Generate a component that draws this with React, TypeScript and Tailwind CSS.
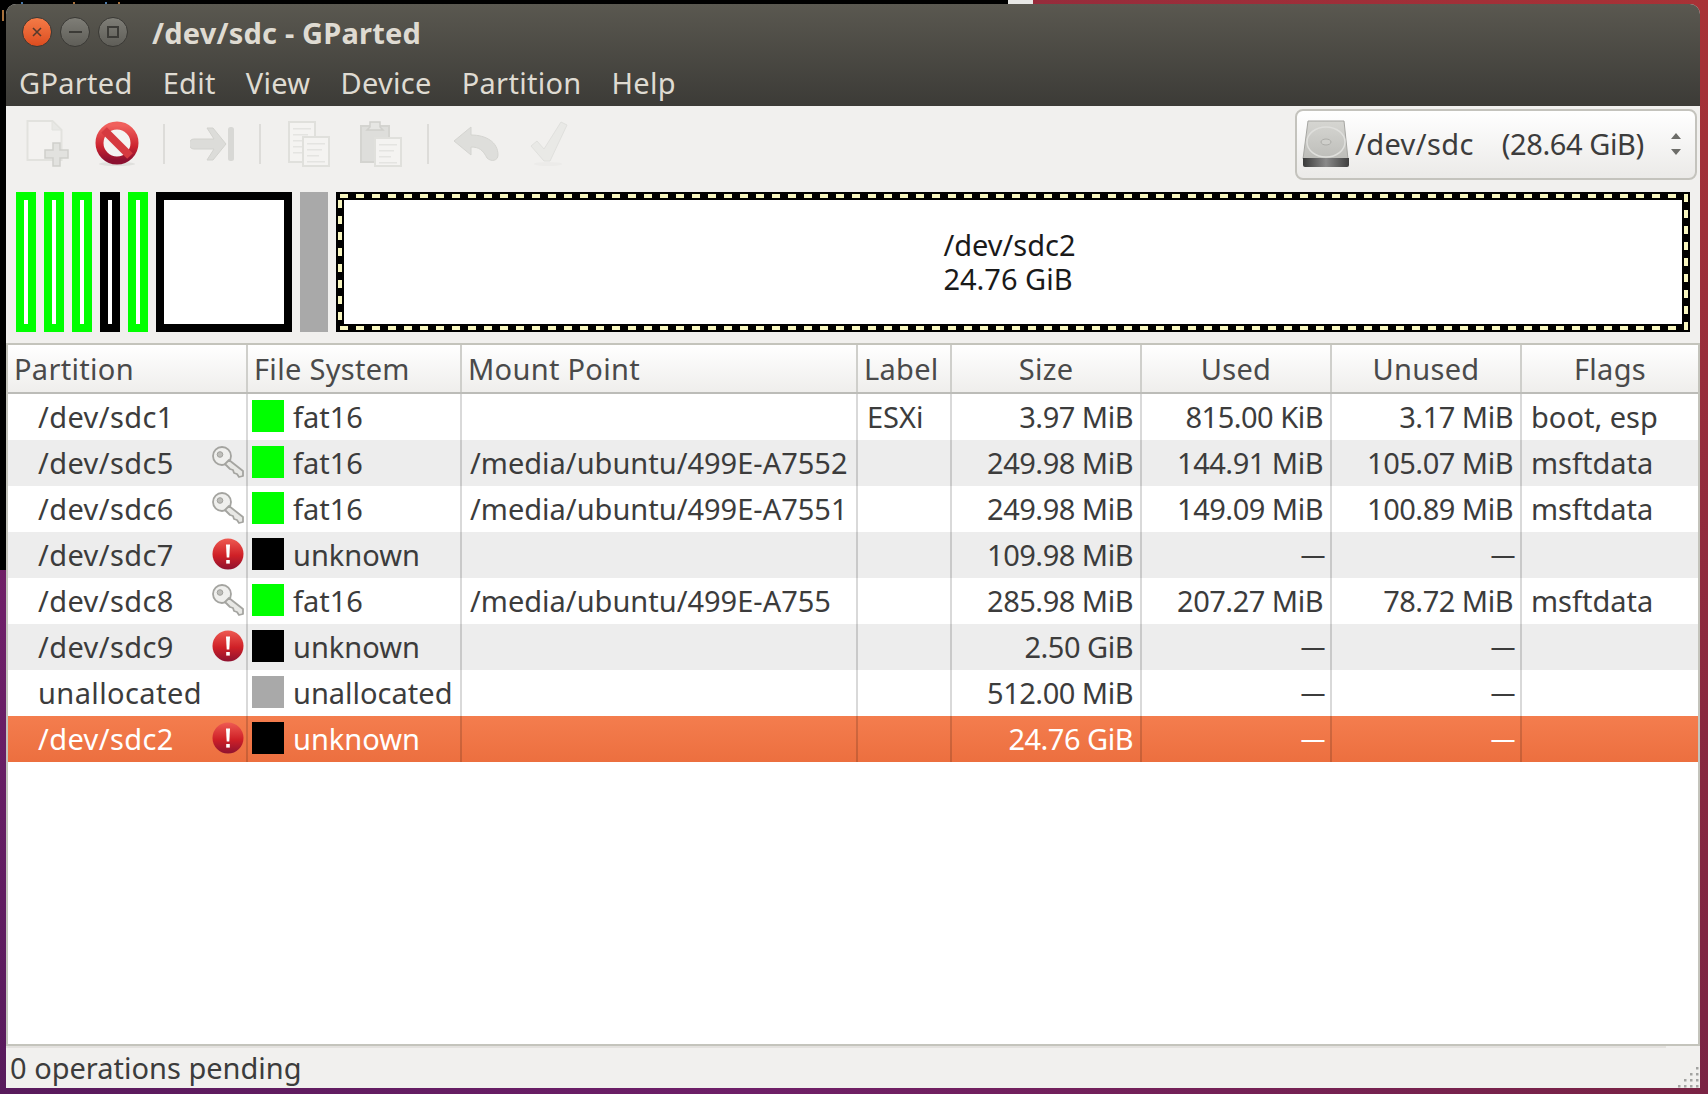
import React from "react";

type Row = {
  name: string;
  icon?: "key" | "error";
  color: string;
  fs: string;
  mount?: string;
  label?: string;
  size: string;
  used: string;
  unused: string;
  flags?: string;
  selected?: boolean;
};

const rows: Row[] = [
  { name: "/dev/sdc1", color: "bg-[#00ff00]", fs: "fat16", label: "ESXi", size: "3.97 MiB", used: "815.00 KiB", unused: "3.17 MiB", flags: "boot, esp" },
  { name: "/dev/sdc5", icon: "key", color: "bg-[#00ff00]", fs: "fat16", mount: "/media/ubuntu/499E-A7552", size: "249.98 MiB", used: "144.91 MiB", unused: "105.07 MiB", flags: "msftdata" },
  { name: "/dev/sdc6", icon: "key", color: "bg-[#00ff00]", fs: "fat16", mount: "/media/ubuntu/499E-A7551", size: "249.98 MiB", used: "149.09 MiB", unused: "100.89 MiB", flags: "msftdata" },
  { name: "/dev/sdc7", icon: "error", color: "bg-black", fs: "unknown", size: "109.98 MiB", used: "—", unused: "—" },
  { name: "/dev/sdc8", icon: "key", color: "bg-[#00ff00]", fs: "fat16", mount: "/media/ubuntu/499E-A755", size: "285.98 MiB", used: "207.27 MiB", unused: "78.72 MiB", flags: "msftdata" },
  { name: "/dev/sdc9", icon: "error", color: "bg-black", fs: "unknown", size: "2.50 GiB", used: "—", unused: "—" },
  { name: "unallocated", color: "bg-[#a9a9a9]", fs: "unallocated", size: "512.00 MiB", used: "—", unused: "—" },
  { name: "/dev/sdc2", icon: "error", color: "bg-black", fs: "unknown", size: "24.76 GiB", used: "—", unused: "—", selected: true },
];

const gridCols = "grid grid-cols-[240px_214px_396px_94px_190px_190px_190px_1fr]";

const KeyIcon = () => (
  <svg width="32" height="32" viewBox="0 0 32 32" className="shrink-0 mb-[2px]">
    <circle cx="10" cy="10" r="9" fill="#efefed" stroke="#a4a4a0" strokeWidth="1.800" />
    <circle cx="8" cy="8.500" r="2.800" fill="#bebeba" stroke="#a0a09c" />
    <path d="M17 14l14 11v5l-4 1-2-3-3-1-1-3-3-1-5-5z" fill="#e8e8e5" stroke="#a4a4a0" strokeWidth="1.800" strokeLinejoin="round" />
  </svg>
);

const ErrorIcon = () => (
  <svg width="32" height="32" viewBox="0 0 32 32" className="shrink-0 mb-[2px]">
    <defs>
      <linearGradient id="errFill" x1="0" y1="0" x2="0" y2="1">
        <stop offset="0" stopColor="#ee5a52" />
        <stop offset="0.55" stopColor="#cf2027" />
        <stop offset="1" stopColor="#8f1230" />
      </linearGradient>
    </defs>
    <circle cx="16" cy="16" r="15.500" fill="url(#errFill)" />
    <path d="M14 6.500h4l-.7 13h-2.600z" fill="#fff" />
    <rect x="14.200" y="22" width="3.600" height="3.600" fill="#fff" />
  </svg>
);

const NewIcon = () => (
  <svg width="44" height="48" viewBox="0 0 44 48" fill="none">
    <path d="M1.500 1h25l9 9v30h-34z" fill="#f3f2f0" stroke="#e2e2de" strokeWidth="2" />
    <path d="M26 1v9h9.500z" fill="#e8e8e5" stroke="#e2e2de" />
    <path d="M27 23h7v7h8v8h-8v8h-7v-8h-8v-8h8z" fill="#e2e2df" stroke="#cfcfcb" strokeWidth="1.500" />
  </svg>
);

const StopIcon = () => (
  <svg width="46" height="46" viewBox="0 0 46 46" fill="none">
    <defs>
      <linearGradient id="stopRing" x1="0" y1="0" x2="0" y2="1">
        <stop offset="0" stopColor="#f0605c" />
        <stop offset="0.6" stopColor="#cc2430" />
        <stop offset="1" stopColor="#8c1030" />
      </linearGradient>
    </defs>
    <ellipse cx="23" cy="43" rx="18" ry="2" fill="#e0e0dd" />
    <circle cx="23" cy="22" r="17.500" fill="#f4f3f1" stroke="url(#stopRing)" strokeWidth="8" />
    <path d="M10 9l26 26" stroke="#d63a40" strokeWidth="8" />
  </svg>
);

const ArrowIcon = () => (
  <svg width="46" height="36" viewBox="0 0 46 36" fill="none">
    <path d="M4 13h20l-7-11h6l13 16-13 16h-6l7-11H4a5 5 0 0 1 0-10z" fill="#dcdcd9" stroke="#d2d2ce" />
    <rect x="38" y="1" width="6" height="34" rx="2.500" fill="#d8d8d5" />
  </svg>
);

const DocLines = ({ x, y, w, h }: { x: number; y: number; w: number; h: number }) => (
  <g>
    <rect x={x} y={y} width={w} height={h} fill="#f4f3f1" stroke="#e0e0dc" strokeWidth="2" />
    {[0, 1, 2, 3, 4].map((i) => (
      <rect key={i} x={x + 4} y={y + 6 + i * 6} width={w - 8 - (i % 3) * 3} height="1.500" fill="#e4e4e1" />
    ))}
  </g>
);

const CopyIcon = () => (
  <svg width="42" height="46" viewBox="0 0 42 46" fill="none">
    <DocLines x={1} y={1} w={26} h={40} />
    <DocLines x={15} y={16} w={26} h={29} />
  </svg>
);

const PasteIcon = () => (
  <svg width="42" height="46" viewBox="0 0 42 46" fill="none">
    <rect x="1" y="5" width="28" height="36" fill="#dededb" stroke="#d4d4d0" strokeWidth="2" />
    <path d="M10 6V1h10v5l3 3H7z" fill="#e6e6e3" stroke="#d0d0cc" strokeWidth="1.500" />
    <DocLines x={15} y={17} w={26} h={28} />
  </svg>
);

const UndoIcon = () => (
  <svg width="46" height="36" viewBox="0 0 46 36" fill="none">
    <path d="M18 1L1 15l17 14v-8c8 0 12 3 16 11 4 4 11 3 11-3C45 16 33 9 18 9z" fill="#dededb" stroke="#d4d4d0" strokeLinejoin="round" />
  </svg>
);

const CheckIcon = () => (
  <svg width="40" height="46" viewBox="0 0 40 46" fill="none">
    <ellipse cx="18" cy="43" rx="14" ry="2" fill="#ecebe9" />
    <path d="M1 25l6-5 7 8L31 1l6 3-17 36h-6z" fill="#e9e9e6" stroke="#e0e0dd" strokeLinejoin="round" />
  </svg>
);

const DiskIcon = () => (
  <svg width="48" height="48" viewBox="0 0 48 48" fill="none">
    <defs>
      <linearGradient id="diskBody" x1="0" y1="0" x2="0" y2="1">
        <stop offset="0" stopColor="#d6d6d2" />
        <stop offset="1" stopColor="#bdbdb9" />
      </linearGradient>
      <linearGradient id="diskEdge" x1="0" y1="0" x2="1" y2="0">
        <stop offset="0" stopColor="#3a3a3a" />
        <stop offset="0.5" stopColor="#8a8a8a" />
        <stop offset="1" stopColor="#3f3f3f" />
      </linearGradient>
    </defs>
    <path d="M6 1h36l4 38H1z" fill="url(#diskBody)" stroke="#a6a6a2" />
    <ellipse cx="24" cy="22" rx="19" ry="15" stroke="#dfdfdc" strokeWidth="1.500" />
    <ellipse cx="24" cy="22" rx="5" ry="3" fill="#cfcfcb" stroke="#adada9" />
    <path d="M1 38h46v7a2 2 0 0 1-2 2H3a2 2 0 0 1-2-2z" fill="url(#diskEdge)" />
  </svg>
);

const Separator = ({ className }: { className: string }) => (
  <div className={`w-[2px] h-[40px] bg-[#dddcd9] ${className}`} />
);

const Block = ({ color, width }: { color: string; width: string }) => (
  <div className={`${width} h-[140px] border-[8px] bg-white ${color}`} />
);

const HeaderCell = ({ text, center, last }: { text: string; center?: boolean; last?: boolean }) => (
  <div
    className={`h-[47px] flex items-center px-[6px] tracking-[0.3px] bg-gradient-to-b from-[#ffffff] to-[#efeeec] ${center ? "justify-center" : ""} ${last ? "" : "border-r-2 border-[#cfcfcb]"}`}
  >
    {text}
  </div>
);

const Cell = ({ children, className }: { children?: React.ReactNode; className?: string }) => (
  <div className={`h-[46px] flex items-center border-r-2 border-black/15 ${className ?? ""}`}>{children}</div>
);

const Amount = ({ value }: { value: string }) => (
  <Cell className="justify-end pr-[7px] tracking-[-0.5px]">
    {value === "—" ? <span className="text-[25px] -mr-[2px]">{value}</span> : value}
  </Cell>
);

const TableRow = ({ row, index }: { row: Row; index: number }) => {
  const bg = row.selected
    ? "bg-gradient-to-b from-[#f47d4e] to-[#ec6f3f] text-white"
    : index % 2 === 1
      ? "bg-[#ededed]"
      : "bg-white";
  return (
    <div className={`${gridCols} ${bg}`}>
      <Cell className="pl-[30px] pr-[2px] justify-between">
        <span className="tracking-[0.4px]">{row.name}</span>
        {row.icon === "key" && <KeyIcon />}
        {row.icon === "error" && <ErrorIcon />}
      </Cell>
      <Cell className="pl-[4px] gap-[9px]">
        <div className={`w-[32px] h-[32px] mb-[2px] ${row.color}`} />
        <span>{row.fs}</span>
      </Cell>
      <Cell className="pl-[8px]">{row.mount}</Cell>
      <Cell className="pl-[9px]">{row.label}</Cell>
      <Amount value={row.size} />
      <Amount value={row.used} />
      <Amount value={row.unused} />
      <div className="h-[46px] flex items-center pl-[9px]">{row.flags}</div>
    </div>
  );
};

export default function App() {
  return (
    <div className="relative w-[1708px] h-[1094px] overflow-hidden pl-[6px] pt-[4px] bg-[linear-gradient(to_bottom_left,#a83236_0%,#7a2344_50%,#6e1f68_78%,#581a5c_100%)] font-['Noto_Sans',sans-serif] text-[29px] text-[#3c3c3c]">
      {/* windows behind the main one */}
      <div className="absolute left-0 top-0 w-[1008px] h-[570px] bg-black">
        <svg width="130" height="22" className="absolute left-0 top-0">
          <rect x="2" y="10" width="2" height="11" fill="#a8713c" />
          <rect x="21" y="2" width="2" height="2" fill="#4a78a8" />
          <rect x="73" y="2" width="2" height="2" fill="#a8713c" />
          <rect x="105" y="2" width="2" height="2" fill="#4a78a8" />
          <rect x="118" y="2" width="2" height="2" fill="#a8713c" />
        </svg>
      </div>
      <div className="absolute left-[1008px] top-0 w-[25px] h-[6px] bg-[#e8e8e6]" />

      <div className="relative w-[1694px] h-[1084px] flex flex-col rounded-t-[10px] overflow-hidden bg-[#f1f0ee]">
        <div className="h-[102px] shrink-0 flex flex-col bg-gradient-to-b from-[#5a5850] to-[#3c3b37] text-[#dfdbd2]">
          <div className="h-[56px] flex items-center pl-[16px]">
            <div className="flex items-center gap-[8px]">
              <div className="w-[30px] h-[30px] rounded-full bg-gradient-to-b from-[#f47b47] to-[#dc4c1e] border border-[#3a3935] flex items-center justify-center">
                <svg width="12" height="12" viewBox="0 0 12 12">
                  <path d="M2 2l8 8M10 2l-8 8" stroke="#55392c" strokeWidth="1.600" />
                </svg>
              </div>
              <div className="w-[30px] h-[30px] rounded-full bg-gradient-to-b from-[#7f7e77] to-[#5f5e58] border border-[#3a3935] flex items-center justify-center">
                <div className="w-[13px] h-[2px] bg-[#3c3b37]" />
              </div>
              <div className="w-[30px] h-[30px] rounded-full bg-gradient-to-b from-[#7f7e77] to-[#5f5e58] border border-[#3a3935] flex items-center justify-center">
                <div className="w-[12px] h-[12px] border-2 border-[#3c3b37]" />
              </div>
            </div>
            <div className="ml-[24px] mt-[1px] font-bold text-[29px] tracking-[0.2px] leading-none">/dev/sdc - GParted</div>
          </div>
          <div className="h-[46px] flex items-center pl-[13px] gap-[30px] tracking-[0.3px]">
            {["GParted", "Edit", "View", "Device", "Partition", "Help"].map((m) => (
              <span key={m}>{m}</span>
            ))}
          </div>
        </div>

        <div className="h-[86px] shrink-0 flex items-center justify-between pl-[20px] pr-[3px] pb-[10px]">
          <div className="flex items-center">
            <NewIcon />
            <div className="ml-[24px]">
              <StopIcon />
            </div>
            <Separator className="ml-[23px]" />
            <div className="ml-[25px]">
              <ArrowIcon />
            </div>
            <Separator className="ml-[23px]" />
            <div className="ml-[27px]">
              <CopyIcon />
            </div>
            <div className="ml-[30px]">
              <PasteIcon />
            </div>
            <Separator className="ml-[25px]" />
            <div className="ml-[24px]">
              <UndoIcon />
            </div>
            <div className="ml-[31px]">
              <CheckIcon />
            </div>
          </div>
          <div className="w-[402px] h-[71px] rounded-[8px] border-2 border-[#c4c3bd] bg-gradient-to-b from-white to-[#ebeae8] flex items-center pl-[5px] pr-[12px] text-[#3c3c3c]">
            <DiskIcon />
            <span className="ml-[5px] tracking-[0.4px]">/dev/sdc</span>
            <span className="ml-[28px] tracking-[-0.4px]">(28.64 GiB)</span>
            <svg width="14" height="26" viewBox="0 0 14 26" className="ml-auto">
              <path d="M7 2l5 6H2zM7 24l-5-6h10z" fill="#6d6d69" />
            </svg>
          </div>
        </div>

        <div className="h-[140px] shrink-0 flex gap-[8px] pl-[10px]">
          <Block color="border-[#00ff00]" width="w-[20px]" />
          <Block color="border-[#00ff00]" width="w-[20px]" />
          <Block color="border-[#00ff00]" width="w-[20px]" />
          <Block color="border-black" width="w-[20px]" />
          <Block color="border-[#00ff00]" width="w-[20px]" />
          <Block color="border-black" width="w-[136px]" />
          <div className="w-[28px] h-[140px] bg-[#a9a9a9]" />
          <div className="relative w-[1354px] h-[140px] bg-white flex flex-col items-center justify-center leading-[34px] text-[#1a1a1a]">
            <svg width="1354" height="140" className="absolute left-0 top-0" fill="none">
              <rect x="4" y="4" width="1346" height="132" stroke="#000" strokeWidth="8" />
              <rect x="4" y="4" width="1346" height="132" stroke="#f8f6c0" strokeWidth="4" strokeDasharray="8 8" />
            </svg>
            <div className="mr-[7px]">
              /dev/sdc2
              <br />
              24.76 GiB
            </div>
          </div>
        </div>

        <div className="mt-[11px] flex-1 min-h-0 flex flex-col border-2 border-[#c4c4bc] bg-white">
          <div className={`${gridCols} border-b-2 border-[#bcbcb8] text-[#4a4a4a]`}>
            <HeaderCell text="Partition" />
            <HeaderCell text="File System" />
            <HeaderCell text="Mount Point" />
            <HeaderCell text="Label" />
            <HeaderCell text="Size" center />
            <HeaderCell text="Used" center />
            <HeaderCell text="Unused" center />
            <HeaderCell text="Flags" center last />
          </div>
          {rows.map((row, i) => (
            <TableRow key={row.name} row={row} index={i} />
          ))}
        </div>

        <div className="relative h-[42px] shrink-0 flex items-center pl-[4px] border-t-2 border-[#e3e1de] mr-[34px]">
          0 operations pending
        </div>
        <svg width="24" height="24" viewBox="0 0 24 24" className="absolute right-0 bottom-0">
          {[
            [20, 3], [20, 9], [14, 9], [20, 15], [14, 15], [8, 15], [20, 21], [14, 21], [8, 21], [2, 21],
          ].map(([x, y]) => (
            <rect key={`${x}-${y}`} x={x} y={y} width="2.500" height="2.500" fill="#a3a3a1" />
          ))}
        </svg>
      </div>
    </div>
  );
}
